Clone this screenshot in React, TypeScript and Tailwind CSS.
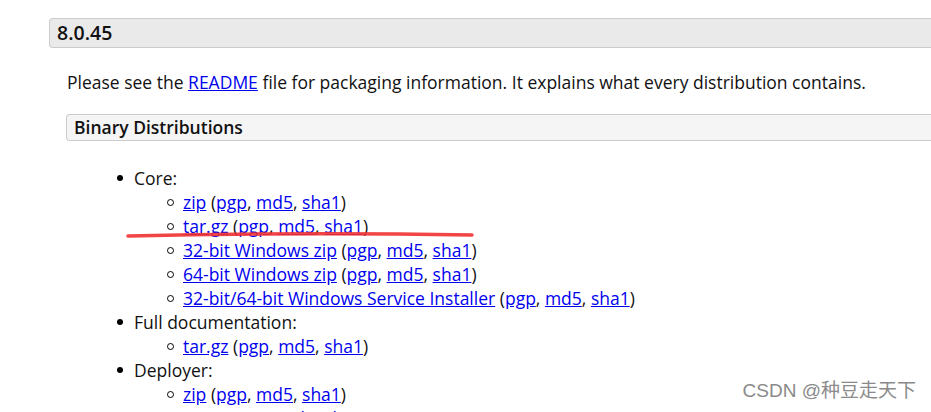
import React from 'react'

const font = { fontFamily: '"Open Sans", "Noto Sans", sans-serif' }

type Item = { main: string; extras: boolean }

function Sub({ item }: { item: Item }) {
  return (
    <li className="flex items-center h-[24px]">
      <span className="w-[7px] h-[7px] rounded-full border border-black mr-[9px] shrink-0" />
      <span>
        <a className="text-[#0000ee] underline">{item.main}</a>
        {item.extras && (
          <>
            {' '}(<a className="text-[#0000ee] underline">pgp</a>,{' '}
            <a className="text-[#0000ee] underline">md5</a>,{' '}
            <a className="text-[#0000ee] underline">sha1</a>)
          </>
        )}
      </span>
    </li>
  )
}

function Group({ title, items }: { title: string; items: Item[] }) {
  return (
    <li>
      <div className="flex items-center h-[24px]">
        <span className="w-[6px] h-[6px] rounded-full bg-black mr-[11px] shrink-0" />
        <span>{title}</span>
      </div>
      <ul className="pl-[50px]">
        {items.map((it, i) => (
          <Sub key={i} item={it} />
        ))}
      </ul>
    </li>
  )
}

export default function App() {
  const core: Item[] = [
    { main: 'zip', extras: true },
    { main: 'tar.gz', extras: true },
    { main: '32-bit Windows zip', extras: true },
    { main: '64-bit Windows zip', extras: true },
    { main: '32-bit/64-bit Windows Service Installer', extras: true },
  ]

  return (
    <div className="relative w-[931px] h-[412px] overflow-hidden bg-white text-[#111] text-[17.5px]" style={font}>
      {/* Version header */}
      <div className="ml-[49px] mt-[18px] h-[30px] flex items-center pl-[7px] bg-[#eaeaea] border border-[#cccccc] border-r-0 rounded-l-[4px]">
        <span className="text-[19.5px] font-semibold">8.0.45</span>
      </div>

      <p className="ml-[67px] mt-[22px] leading-[24px]">
        Please see the <a className="text-[#0000ee] underline">README</a> file for packaging information. It explains what every distribution contains.
      </p>

      {/* Section header */}
      <div className="ml-[66px] mt-[20px] h-[27px] flex items-center pl-[7px] bg-[#f5f5f5] border border-[#cccccc] border-r-0 rounded-l-[4px]">
        <span className="font-semibold">Binary Distributions</span>
      </div>

      <ul className="ml-[117px] mt-[25px]">
        <Group title="Core:" items={core} />
        <Group title="Full documentation:" items={[{ main: 'tar.gz', extras: true }]} />
        <Group title="Deployer:" items={[{ main: 'zip', extras: true }, { main: 'tar.gz', extras: true }]} />
      </ul>

      {/* Red annotation stroke */}
      <svg className="absolute left-0 top-0 pointer-events-none" width="931" height="412">
        <path d="M128 236 Q300 232 472 235" stroke="#f03030" strokeWidth="3.5" strokeLinecap="round" fill="none" opacity="0.9" />
      </svg>

      {/* Watermark */}
      <div
        className="absolute right-[15px] bottom-[7px] text-[19px] text-[#8a8a8a]"
        style={{ fontFamily: '"Liberation Sans", "Noto Sans CJK SC", sans-serif' }}
      >
        CSDN @种豆走天下
      </div>
    </div>
  )
}
